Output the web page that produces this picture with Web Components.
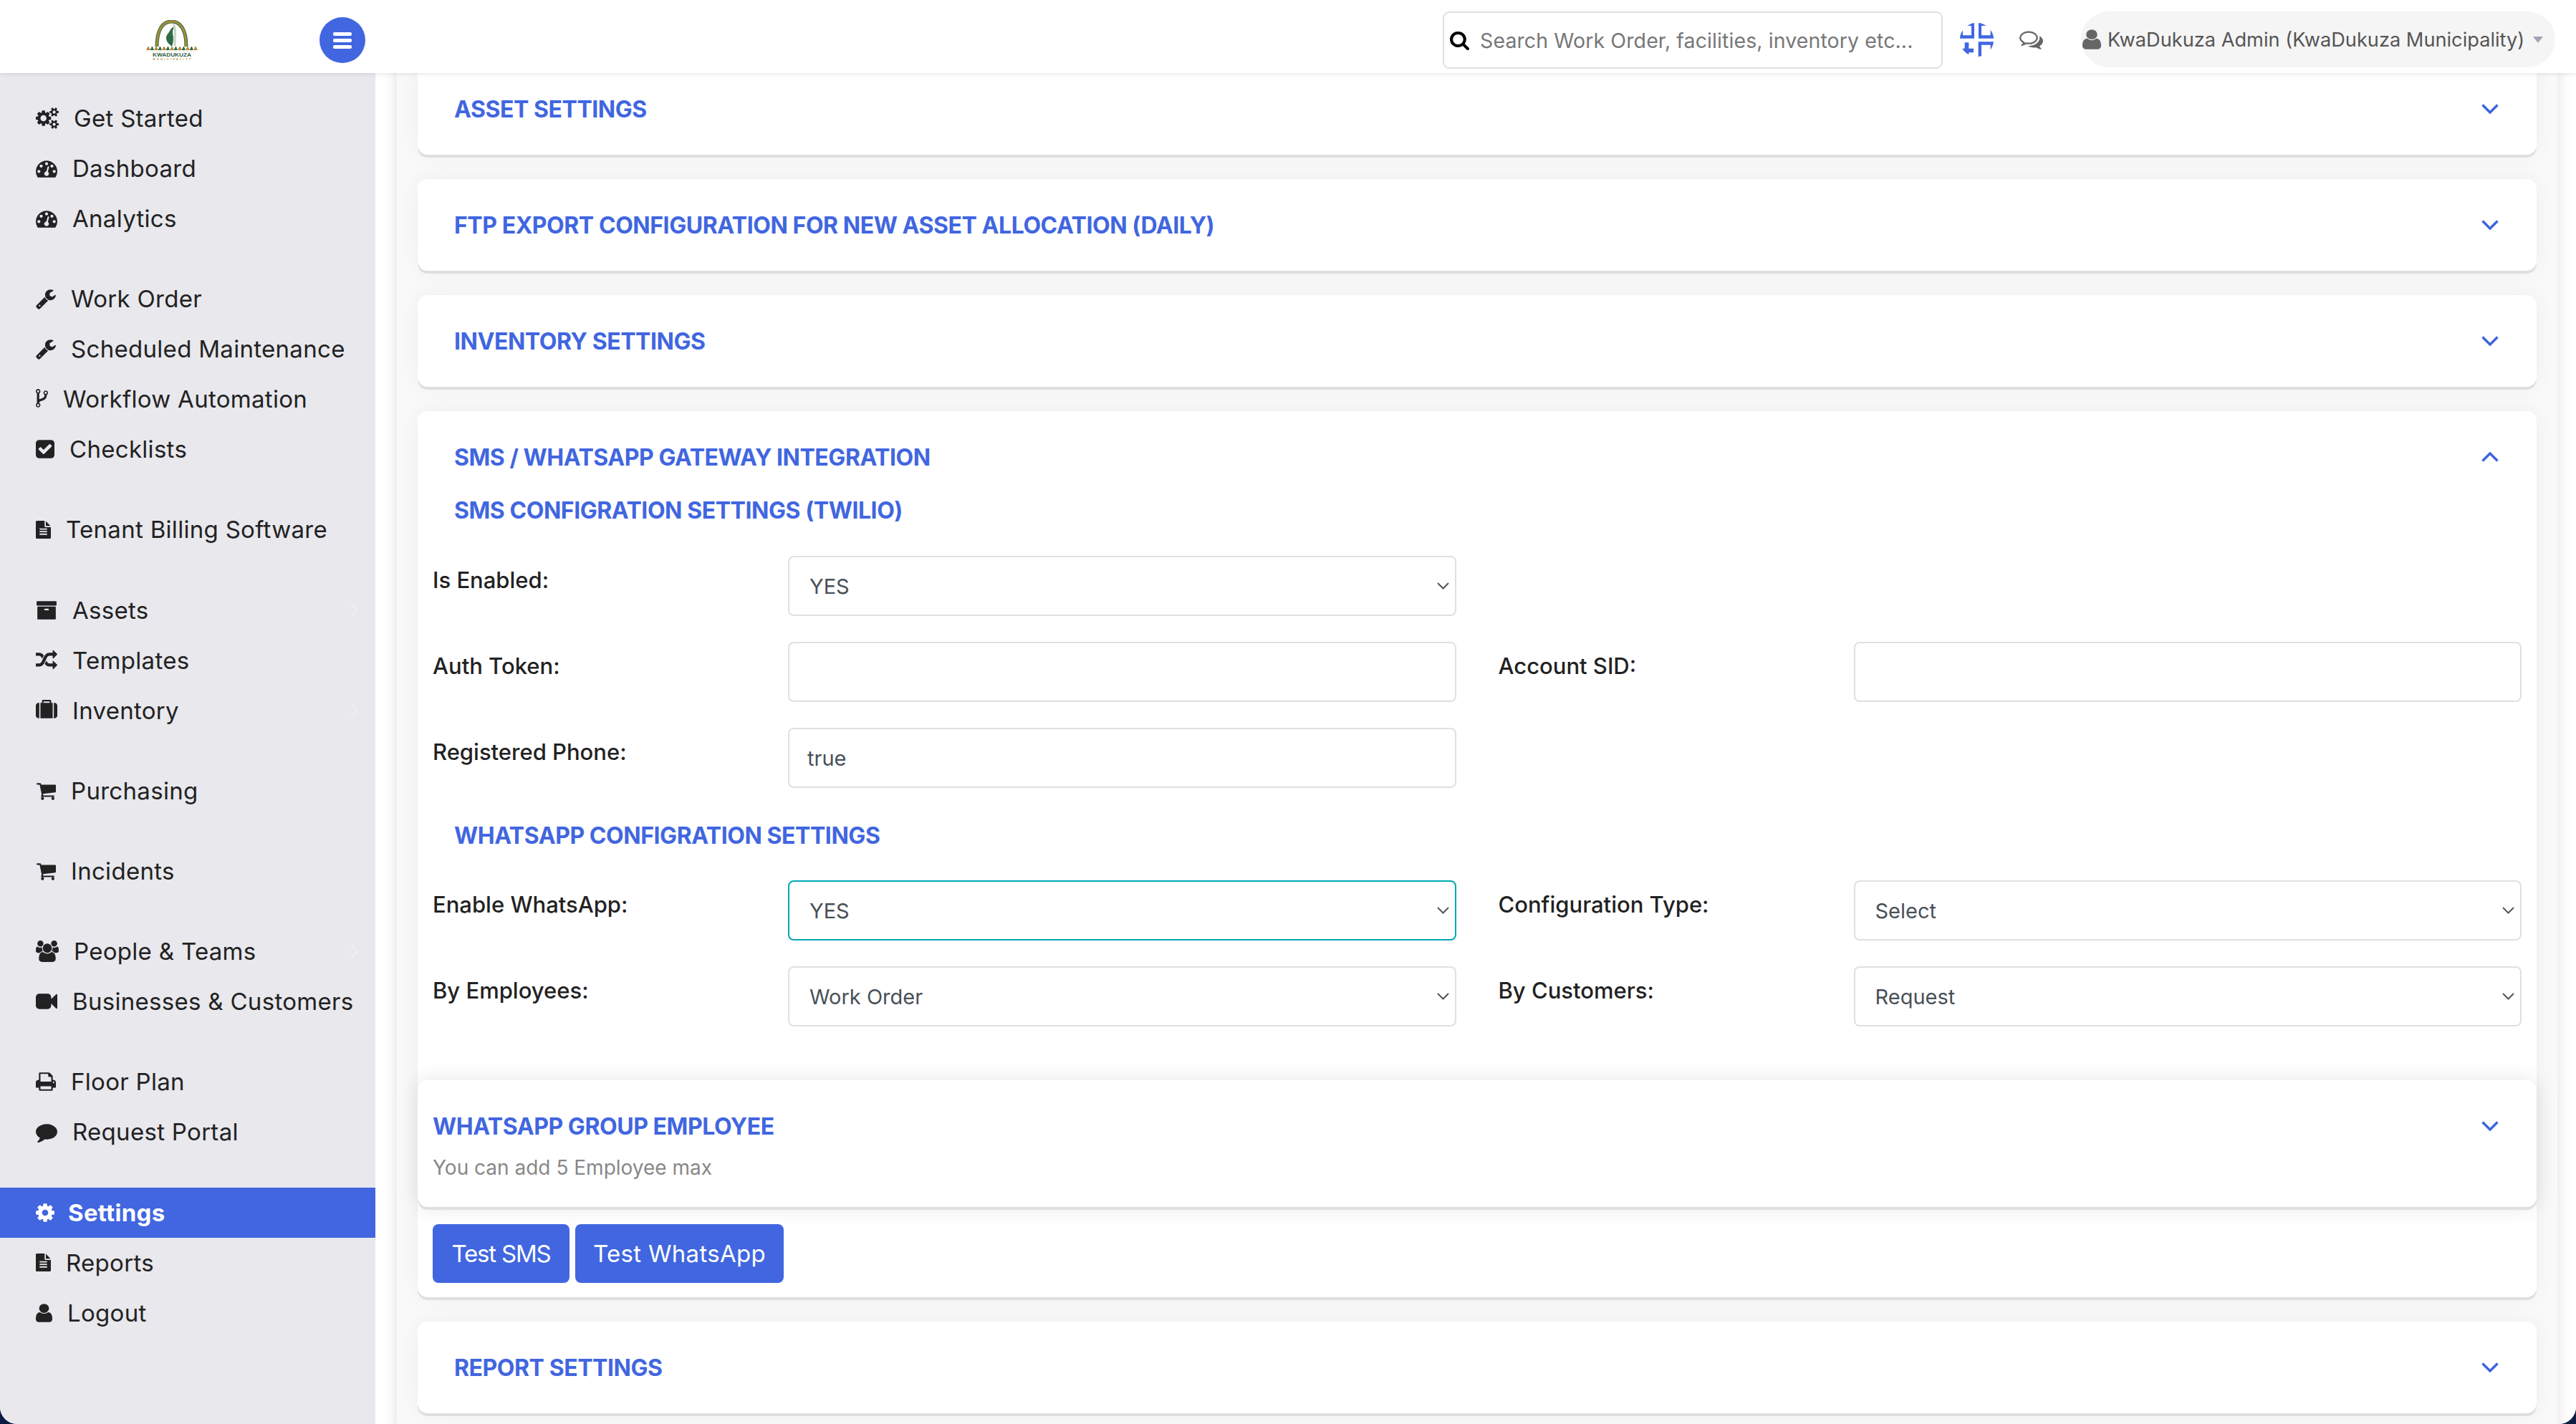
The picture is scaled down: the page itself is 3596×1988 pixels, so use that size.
<!DOCTYPE html>
<html>
<head>
<meta charset="utf-8">
<title>Settings</title>
<style>
  html, body { margin: 0; padding: 0; background: #0a1c42; }
  body { font-family: Inter, "Noto Sans", sans-serif; }
</style>
</head>
<body>
<app-shell>
  <app-header slot="header"></app-header>
  <side-nav slot="nav">
    <nav-group>
      <nav-item icon="cogs">Get Started</nav-item>
      <nav-item icon="dashboard">Dashboard</nav-item>
      <nav-item icon="dashboard">Analytics</nav-item>
    </nav-group>
    <nav-group>
      <nav-item icon="wrench">Work Order</nav-item>
      <nav-item icon="wrench">Scheduled Maintenance</nav-item>
      <nav-item icon="fork">Workflow Automation</nav-item>
      <nav-item icon="check">Checklists</nav-item>
    </nav-group>
    <nav-group>
      <nav-item icon="file">Tenant Billing Software</nav-item>
    </nav-group>
    <nav-group>
      <nav-item icon="archive" sub>Assets</nav-item>
      <nav-item icon="random">Templates</nav-item>
      <nav-item icon="suitcase" sub>Inventory</nav-item>
    </nav-group>
    <nav-group>
      <nav-item icon="cart">Purchasing</nav-item>
    </nav-group>
    <nav-group>
      <nav-item icon="cart">Incidents</nav-item>
    </nav-group>
    <nav-group>
      <nav-item icon="users" sub>People &amp; Teams</nav-item>
      <nav-item icon="video">Businesses &amp; Customers</nav-item>
    </nav-group>
    <nav-group>
      <nav-item icon="print">Floor Plan</nav-item>
      <nav-item icon="comment">Request Portal</nav-item>
    </nav-group>
    <nav-group>
      <nav-item icon="cog" active>Settings</nav-item>
      <nav-item icon="file">Reports</nav-item>
      <nav-item icon="user">Logout</nav-item>
    </nav-group>
  </side-nav>

  <settings-panel>
    <accordion-card class="first" heading="ASSET SETTINGS"></accordion-card>
    <accordion-card heading="FTP EXPORT CONFIGURATION FOR NEW ASSET ALLOCATION (DAILY)"></accordion-card>
    <accordion-card heading="INVENTORY SETTINGS"></accordion-card>
    <accordion-card heading="SMS / WHATSAPP GATEWAY INTEGRATION" open expanded>
      <section-title>SMS CONFIGRATION SETTINGS (TWILIO)</section-title>
      <form-row class="top">
        <form-field label="Is Enabled:"><form-select value="YES"></form-select></form-field>
      </form-row>
      <form-row>
        <form-field label="Auth Token:"><form-input></form-input></form-field>
        <form-field label="Account SID:"><form-input></form-input></form-field>
      </form-row>
      <form-row>
        <form-field label="Registered Phone:"><form-input value="true"></form-input></form-field>
      </form-row>
      <section-title class="second">WHATSAPP CONFIGRATION SETTINGS</section-title>
      <form-row>
        <form-field label="Enable WhatsApp:"><form-select value="YES" focused></form-select></form-field>
        <form-field label="Configuration Type:"><form-select value="Select"></form-select></form-field>
      </form-row>
      <form-row>
        <form-field label="By Employees:"><form-select value="Work Order"></form-select></form-field>
        <form-field label="By Customers:"><form-select value="Request"></form-select></form-field>
      </form-row>
      <accordion-card inner open heading="WHATSAPP GROUP EMPLOYEE">You can add 5 Employee max</accordion-card>
      <button-bar>
        <action-button style="width:191px;letter-spacing:-1.2px">Test SMS</action-button>
        <action-button style="width:291px;letter-spacing:.3px">Test WhatsApp</action-button>
      </button-bar>
    </accordion-card>
    <accordion-card heading="REPORT SETTINGS"></accordion-card>
  </settings-panel>
</app-shell>

<script>
const ICONS = {
  cogs: [0, 1920, 30, 32, 'M896 896q0-106-75-181t-181-75-181 75-75 181 75 181 181 75 181-75 75-181zm768 512q0-52-38-90t-90-38-90 38-38 90q0 53 37.5 90.5t90.5 37.5 90.5-37.5 37.5-90.5zm0-1024q0-52-38-90t-90-38-90 38-38 90q0 53 37.5 90.5t90.5 37.5 90.5-37.5 37.5-90.5zm-384 421v185q0 10-7 19.5t-16 10.5l-155 24q-11 35-32 76 34 48 90 115 7 11 7 20 0 12-7 19-23 30-82.5 89.5t-78.5 59.5q-11 0-21-7l-115-90q-37 19-77 31-11 108-23 155-7 24-30 24h-186q-11 0-20-7.5t-10-17.5l-23-153q-34-10-75-31l-118 89q-7 7-20 7-11 0-21-8-144-133-144-160 0-9 7-19 10-14 41-53t47-61q-23-44-35-82l-152-24q-10-1-17-9.5t-7-19.5v-185q0-10 7-19.5t16-10.5l155-24q11-35 32-76-34-48-90-115-7-11-7-20 0-12 7-20 22-30 82-89t79-59q11 0 21 7l115 90q34-18 77-32 11-108 23-154 7-24 30-24h186q11 0 20 7.5t10 17.5l23 153q34 10 75 31l118-89q8-7 20-7 11 0 21 8 144 133 144 160 0 8-7 19-12 16-42 54t-45 60q23 48 34 82l152 23q10 2 17 10.5t7 19.5zm640 533v140q0 16-149 31-12 27-30 52 51 113 51 138 0 4-4 7-122 71-124 71-8 0-46-47t-52-68q-20 2-30 2t-30-2q-14 21-52 68t-46 47q-2 0-124-71-4-3-4-7 0-25 51-138-18-25-30-52-149-15-149-31v-140q0-16 149-31 13-29 30-52-51-113-51-138 0-4 4-7 4-2 35-20t59-34 30-16q8 0 46 46.5t52 67.5q20-2 30-2t30 2q51-71 92-112l6-2q4 0 124 70 4 3 4 7 0 25-51 138 17 23 30 52 149 15 149 31zm0-1024v140q0 16-149 31-12 27-30 52 51 113 51 138 0 4-4 7-122 71-124 71-8 0-46-47t-52-68q-20 2-30 2t-30-2q-14 21-52 68t-46 47q-2 0-124-71-4-3-4-7 0-25 51-138-18-25-30-52-149-15-149-31v-140q0-16 149-31 13-29 30-52-51-113-51-138 0-4 4-7 4-2 35-20t59-34 30-16q8 0 46 46.5t52 67.5q20-2 30-2t30 2q51-71 92-112l6-2q4 0 124 70 4 3 4 7 0 25-51 138 17 23 30 52 149 15 149 31z'],
  dashboard: [0, 1792, 30, 30, 'M384 1152q0-53-37.5-90.5t-90.5-37.5-90.5 37.5-37.5 90.5 37.5 90.5 90.5 37.5 90.5-37.5 37.5-90.5zm192-448q0-53-37.5-90.5t-90.5-37.5-90.5 37.5-37.5 90.5 37.5 90.5 90.5 37.5 90.5-37.5 37.5-90.5zm428 481l101-382q6-26-7.5-48.5t-38.5-29.5-48 6.5-30 39.5l-101 382q-60 5-107 43.5t-63 98.5q-20 77 20 146t117 89 146-20 89-117q16-60-6-117t-72-91zm660-33q0-53-37.5-90.5t-90.5-37.5-90.5 37.5-37.5 90.5 37.5 90.5 90.5 37.5 90.5-37.5 37.5-90.5zm-640-640q0-53-37.5-90.5t-90.5-37.5-90.5 37.5-37.5 90.5 37.5 90.5 90.5 37.5 90.5-37.5 37.5-90.5zm448 192q0-53-37.5-90.5t-90.5-37.5-90.5 37.5-37.5 90.5 37.5 90.5 90.5 37.5 90.5-37.5 37.5-90.5zm320 448q0 261-141 483-19 29-54 29h-1402q-35 0-54-29-141-221-141-483 0-182 71-348t191-286 286-191 348-71 348 71 286 191 191 286 71 348z'],
  wrench: [64, 1664, 30, 28, 'M448 1472q0-26-19-45t-45-19-45 19-19 45 19 45 45 19 45-19 19-45zm644-420l-682 682q-37 37-90 37-52 0-91-37l-106-108q-38-36-38-90 0-53 38-91l681-681q39 98 114.5 173.5t173.5 114.5zm634-435q0 39-23 106-47 134-164.5 217.5t-258.5 83.5q-185 0-316.5-131.5t-131.5-316.5 131.5-316.5 316.5-131.5q58 0 121.5 16.5t107.5 46.5q16 11 16 28t-16 28l-293 169v224l193 107q5-3 79-48.5t135.5-81 70.5-35.5q15 0 23.5 10t8.5 25z'],
  fork: [192, 1024, 30, 17, 'M480 1408q0-40-28-68t-68-28-68 28-28 68 28 68 68 28 68-28 28-68zm0-1152q0-40-28-68t-68-28-68 28-28 68 28 68 68 28 68-28 28-68zm640 128q0-40-28-68t-68-28-68 28-28 68 28 68 68 28 68-28 28-68zm96 0q0 52-26 96.5t-70 69.5q-2 287-226 414-67 38-203 81-128 40-169.5 71t-41.5 100v26q44 25 70 69.5t26 96.5q0 80-56 136t-136 56-136-56-56-136q0-52 26-96.5t70-69.5v-820q-44-25-70-69.5t-26-96.5q0-80 56-136t136-56 136 56 56 136q0 52-26 96.5t-70 69.5v497q54-26 154-57 55-17 87.5-29.5t70.5-31 59-39.5 40.5-51 28-69.5 8.5-91.5q-44-25-70-69.5t-26-96.5q0-80 56-136t136-56 136 56 56 136z'],
  check: [128, 1536, 30, 26, 'M813 1299l614-614q19-19 19-45t-19-45l-102-102q-19-19-45-19t-45 19l-467 467-211-211q-19-19-45-19t-45 19l-102 102q-19 19-19 45t19 45l358 358q19 19 45 19t45-19zm851-883v960q0 119-84.5 203.5t-203.5 84.5h-960q-119 0-203.5-84.5t-84.5-203.5v-960q0-119 84.5-203.5t203.5-84.5h960q119 0 203.5 84.5t84.5 203.5z'],
  file: [128, 1536, 25, 21, 'M1596 476q14 14 28 36h-472v-472q22 14 36 28zm-476 164h544v1056q0 40-28 68t-68 28h-1344q-40 0-68-28t-28-68v-1600q0-40 28-68t68-28h800v544q0 40 28 68t68 28zm160 736v-64q0-14-9-23t-23-9h-704q-14 0-23 9t-9 23v64q0 14 9 23t23 9h704q14 0 23-9t9-23zm0-256v-64q0-14-9-23t-23-9h-704q-14 0-23 9t-9 23v64q0 14 9 23t23 9h704q14 0 23-9t9-23zm0-256v-64q0-14-9-23t-23-9h-704q-14 0-23 9t-9 23v64q0 14 9 23t23 9h704q14 0 23-9t9-23z'],
  archive: [0, 1792, 30, 30, 'M1088 832q0-26-19-45t-45-19h-256q-26 0-45 19t-19 45 19 45 45 19h256q26 0 45-19t19-45zm576-192v960q0 26-19 45t-45 19h-1408q-26 0-45-19t-19-45v-960q0-26 19-45t45-19h1408q26 0 45 19t19 45zm64-448v256q0 26-19 45t-45 19h-1536q-26 0-45-19t-19-45v-256q0-26 19-45t45-19h1536q26 0 45 19t19 45z'],
  random: [0, 1792, 30, 30, 'M666 481q-60 92-137 273-22-45-37-72.5t-40.5-63.5-51-56.5-63-35-81.5-14.5h-224q-14 0-23-9t-9-23v-192q0-14 9-23t23-9h224q250 0 410 225zm1126 799q0 14-9 23l-320 320q-9 9-23 9-13 0-22.5-9.5t-9.5-22.5v-192q-32 0-85 .5t-81 1-73-1-71-5-64-10.5-63-18.5-58-28.5-59-40-55-53.5-56-69.5q59-93 136-273 22 45 37 72.5t40.5 63.5 51 56.5 63 35 81.5 14.5h256v-192q0-14 9-23t23-9q12 0 24 10l319 319q9 9 9 23zm0-896q0 14-9 23l-320 320q-9 9-23 9-13 0-22.5-9.5t-9.5-22.5v-192h-256q-48 0-87 15t-69 45-51 61.5-45 77.5q-32 62-78 171-29 66-49.5 111t-54 105-64 100-74 83-90 68.5-106.5 42-128 16.5h-224q-14 0-23-9t-9-23v-192q0-14 9-23t23-9h224q48 0 87-15t69-45 51-61.5 45-77.5q32-62 78-171 29-66 49.5-111t54-105 64-100 74-83 90-68.5 106.5-42 128-16.5h256v-192q0-14 9-23t23-9q12 0 24 10l319 319q9 9 9 23z'],
  suitcase: [0, 1792, 30, 30, 'M640 256h512v-128h-512v128zm-352 0v1280h-64q-92 0-158-66t-66-158v-832q0-92 66-158t158-66h64zm1120 0v1280h-1024v-1280h128v-160q0-40 28-68t68-28h576q40 0 68 28t28 68v160h128zm384 224v832q0 92-66 158t-158 66h-64v-1280h64q92 0 158 66t66 158z'],
  cart: [0, 1728, 30, 28, 'M704 1536q0 52-38 90t-90 38-90-38-38-90 38-90 90-38 90 38 38 90zm896 0q0 52-38 90t-90 38-90-38-38-90 38-90 90-38 90 38 38 90zm128-1088v512q0 24-16.5 42.5t-40.5 21.5l-1044 122q13 60 13 70 0 16-24 64h920q26 0 45 19t19 45-19 45-45 19h-1024q-26 0-45-19t-19-45q0-11 8-31.5t16-36 21.5-40 15.5-29.5l-177-823h-204q-26 0-45-19t-19-45 19-45 45-19h256q16 0 28.5 6.5t19.5 15.5 13 24.5 8 26 5.5 29.5 4.5 26h1201q26 0 45 19t19 45z'],
  users: [0, 1920, 30, 32, 'M593 896q-162 5-265 128h-134q-82 0-138-40.5t-56-118.5q0-353 124-353 6 0 43.5 21t97.5 42.5 119 21.5q67 0 133-23-5 37-5 66 0 139 81 256zm1071 637q0 120-73 189.5t-194 69.5h-874q-121 0-194-69.5t-73-189.5q0-53 3.5-103.5t14-109 26.5-108.5 43-97.5 62-81 85.5-53.5 111.5-20q10 0 43 21.5t73 48 107 48 135 21.5 135-21.5 107-48 73-48 43-21.5q61 0 111.5 20t85.5 53.5 62 81 43 97.5 26.5 108.5 14 109 3.5 103.5zm-1024-1277q0 106-75 181t-181 75-181-75-75-181 75-181 181-75 181 75 75 181zm704 384q0 159-112.5 271.5t-271.5 112.5-271.5-112.5-112.5-271.5 112.5-271.5 271.5-112.5 271.5 112.5 112.5 271.5zm576 225q0 78-56 118.5t-138 40.5h-134q-103-123-265-128 81-117 81-256 0-29-5-66 66 23 133 23 59 0 119-21.5t97.5-42.5 43.5-21q124 0 124 353zm-128-609q0 106-75 181t-181 75-181-75-75-181 75-181 181-75 181 75 75 181z'],
  video: [0, 1792, 30, 30, 'M1792 352v1088q0 42-39 59-13 5-25 5-27 0-45-19l-403-403v166q0 119-84.5 203.5t-203.5 84.5h-704q-119 0-203.5-84.5t-84.5-203.5v-704q0-119 84.5-203.5t203.5-84.5h704q119 0 203.5 84.5t84.5 203.5v165l403-402q18-19 45-19 12 0 25 5 39 17 39 59z'],
  print: [64, 1664, 30, 28, 'M448 1536h896v-256h-896v256zm0-640h896v-384h-160q-40 0-68-28t-28-68v-160h-640v640zm1152 64q0-26-19-45t-45-19-45 19-19 45 19 45 45 19 45-19 19-45zm128 0v416q0 13-9.5 22.5t-22.5 9.5h-224v160q0 40-28 68t-68 28h-960q-40 0-68-28t-28-68v-160h-224q-13 0-22.5-9.5t-9.5-22.5v-416q0-79 56.5-135.5t135.5-56.5h64v-544q0-40 28-68t68-28h672q40 0 88 20t76 48l152 152q28 28 48 76t20 88v256h64q79 0 135.5 56.5t56.5 135.5z'],
  comment: [0, 1792, 30, 30, 'M1792 896q0 174-120 321.5t-326 233-450 85.5q-70 0-145-8-198 175-460 242-49 14-114 22-17 2-30.5-9t-17.5-29v-1q-3-4-.5-12t2-10 4.5-9.5l6-9 7-8.5 8-9q7-8 31-34.5t34.5-38 31-39.5 32.5-51 27-59 26-76q-157-89-247.5-220t-90.5-281q0-130 71-248.5t191-204.5 286-136.5 348-50.5q244 0 450 85.5t326 233 120 321.5z'],
  cog: [128, 1536, 30, 26, 'M1152 896q0-106-75-181t-181-75-181 75-75 181 75 181 181 75 181-75 75-181zm512-109v222q0 12-8 23t-20 13l-185 28q-19 54-39 91 35 50 107 138 10 12 10 25t-9 23q-27 37-99 108t-94 71q-12 0-26-9l-138-108q-44 23-91 38-16 136-29 186-7 28-36 28h-222q-14 0-24.5-8.5t-11.5-21.5l-28-184q-49-16-90-37l-141 107q-10 9-25 9-14 0-25-11-126-114-165-168-7-10-7-23 0-12 8-23 15-21 51-66.5t54-70.5q-27-50-41-99l-183-27q-13-2-21-12.5t-8-23.5v-222q0-12 8-23t19-13l186-28q14-46 39-92-40-57-107-138-10-12-10-24 0-10 9-23 26-36 98.5-107.5t94.5-71.5q13 0 26 10l138 107q44-23 91-38 16-136 29-186 7-28 36-28h222q14 0 24.5 8.5t11.5 21.5l28 184q49 16 90 37l142-107q9-9 24-9 13 0 25 10 129 119 165 170 7 8 7 22 0 12-8 23-15 21-51 66.5t-54 70.5q26 50 41 98l183 28q13 2 21 12.5t8 23.5z'],
  user: [256, 1280, 30, 23, 'M1536 1399q0 109-62.5 187t-150.5 78h-854q-88 0-150.5-78t-62.5-187q0-85 8.5-160.5t31.5-152 58.5-131 94-89 134.5-34.5q131 128 313 128t313-128q76 0 134.5 34.5t94 89 58.5 131 31.5 152 8.5 160.5zm-256-887q0 159-112.5 271.5t-271.5 112.5-271.5-112.5-112.5-271.5 112.5-271.5 271.5-112.5 271.5 112.5 112.5 271.5z'],
  search: [64, 1664, 28, 27, 'M1216 832q0-185-131.5-316.5t-316.5-131.5-316.5 131.5-131.5 316.5 131.5 316.5 316.5 131.5 316.5-131.5 131.5-316.5zm512 832q0 52-38 90t-90 38q-54 0-90-38l-343-342q-179 124-399 124-143 0-273.5-55.5t-225-150-150-225-55.5-273.5 55.5-273.5 150-225 225-150 273.5-55.5 273.5 55.5 225 150 150 225 55.5 273.5q0 220-124 399l343 343q37 37 37 90z'],
  comments: [0, 1792, 32, 33, 'M704 384q-153 0-286 52t-211.5 141-78.5 191q0 82 53 158t149 132l97 56-35 84q34-20 62-39l44-31 53 10q78 14 153 14 153 0 286-52t211.5-141 78.5-191-78.5-191-211.5-141-286-52zm0-128q191 0 353.5 68.5t256.5 186.5 94 257-94 257-256.5 186.5-353.5 68.5q-86 0-176-16-124 88-278 128-36 9-86 16h-3q-11 0-20.5-8t-11.5-21q-1-3-1-6.5t.5-6.5 2-6l2.5-5 3.5-5.5 4-5 4.5-5 4-4.5q5-6 23-25t26-29.5 22.5-29 25-38.5 20.5-44q-124-72-195-177t-71-224q0-139 94-257t256.5-186.5 353.5-68.5zm822 1169q10 24 20.5 44t25 38.5 22.5 29 26 29.5 23 25q1 1 4 4.5t4.5 5 4 5 3.5 5.5l2.5 5 2 6 .5 6.5-1 6.5q-3 14-13 22t-22 7q-50-7-86-16-154-40-278-128-90 16-176 16-271 0-472-132 58 4 88 4 161 0 309-45t264-129q125-92 192-212t67-254q0-77-23-152 129 71 204 178t75 230q0 120-71 224.5t-195 176.5z']
};

// [viewBox x, viewBox width, height, width, path]
function iconSvg(name, height, width) {
  const [vx, vw, h, w, d] = ICONS[name];
  return `<svg viewBox="${vx} 0 ${vw} 1792" width="${width || w}" height="${height || h}" preserveAspectRatio="none" fill="currentColor" style="display:block;flex:none"><path d="${d}"/></svg>`;
}

class AppShell extends HTMLElement {
  constructor() {
    super();
    this.attachShadow({ mode: 'open' });
    this.shadowRoot.innerHTML = `
      <style>
        :host {
          display: grid;
          grid-template-columns: 524px 1fr;
          grid-template-rows: 102px 1fr;
          height: 1988px;
          overflow: hidden;
          background: #fff;
          border-radius: 0 0 24px 24px;
        }
        .header { grid-column: 1 / 3; position: relative; z-index: 2; }
        .main { background: #fff; padding: 0 26px 0 30px; min-height: 0; }
      </style>
      <div class="header"><slot name="header"></slot></div>
      <slot name="nav"></slot>
      <div class="main"><slot></slot></div>
    `;
  }
}

class AppHeader extends HTMLElement {
  constructor() {
    super();
    this.attachShadow({ mode: 'open' });
    this.shadowRoot.innerHTML = `
      <style>
        :host {
          display: flex;
          align-items: center;
          height: 102px;
          background: #fff;
          box-shadow: 0 2px 5px rgba(0,0,0,.09);
          padding: 8px 29px 0 204px;
          box-sizing: border-box;
        }
        .logo { display: block; width: 72px; height: 56px; flex: none; margin-top: 2px; }
        .burger {
          width: 64px; height: 64px; margin: 2px 0 0 170px; flex: none;
          border-radius: 50%; background: #4166e0;
          display: flex; flex-direction: column; justify-content: center; align-items: center; gap: 4px;
        }
        .burger i { display: block; width: 26px; height: 5px; border-radius: 2px; background: #fff; }
        .search {
          margin: 2px 0 0 auto;
          width: 698px; height: 80px; box-sizing: border-box;
          border: 2px solid #e0e0e0; border-radius: 9px;
          display: flex; align-items: center; padding-left: 8px; gap: 15px; color: #000;
        }
        .search input {
          border: 0; outline: 0; flex: 1; min-width: 0; padding: 0; background: none;
          font: 400 28.5px Inter, sans-serif; letter-spacing: .1px; color: #777;
        }
        .search input::placeholder { color: #777; opacity: 1; }
        .scan { display: block; margin-left: 24px; flex: none; }
        .chat { margin-left: 36px; color: #666; flex: none; }
        .user {
          margin-left: 53px; width: 662px; height: 78px; box-sizing: border-box; flex: none;
          background: #f5f5f5; border-radius: 39px;
          display: flex; align-items: center; padding-left: 2px; color: #666;
        }
        .user span { margin-left: 9px; font: 400 27.2px Inter, sans-serif; color: #555; white-space: nowrap; }
        .caret {
          margin-left: auto; margin-right: 17px; width: 0; height: 0;
          border-left: 7px solid transparent; border-right: 7px solid transparent;
          border-top: 9px solid #a5a5b8;
        }
      </style>
      <svg class="logo" viewBox="0 0 72 56">
        <defs>
          <pattern id="tri" width="11" height="7" patternUnits="userSpaceOnUse">
            <path d="M0 7L3 1 6 7z" fill="#b58a3a"/><path d="M5.5 7L8.5 1 11 7z" fill="#2f6b45"/>
          </pattern>
        </defs>
        <path d="M15 37C15 12 24 2 35.5 2S56 12 56 37" fill="none" stroke="#2f6b45" stroke-width="5"/>
        <path d="M15 37C15 12 24 2 35.5 2S56 12 56 37" fill="none" stroke="#a98c35" stroke-width="3"/>
        <path d="M40 8C36 14 37 18 38 24 38 30 37 34 36 37 33 34 28 31 28 25 28 20 33 17 34 13 36 11 38 9 40 8Z" fill="#2f6b45"/>
        <path d="M38 6C42 12 40 22 40 36" fill="none" stroke="#c9d2c8" stroke-width="3"/>
        <rect x="0" y="37" width="72" height="7" fill="url(#tri)"/>
        <text x="36" y="51" text-anchor="middle" textLength="54" lengthAdjust="spacingAndGlyphs" font-family="Liberation Sans" font-weight="700" font-size="7" fill="#2f5f48">KWADUKUZA</text>
        <text x="36" y="56" text-anchor="middle" textLength="53" lengthAdjust="spacing" font-family="Liberation Sans" font-weight="700" font-size="3.6" fill="#b58a3a">MUNICIPALITY</text>
      </svg>
      <div class="burger"><i></i><i></i><i></i></div>
      <div class="search">${iconSvg('search')}<input type="text" placeholder="Search Work Order, facilities, inventory etc..."></div>
      <svg class="scan" width="47" height="47" viewBox="48 93 141 141" fill="#4166e0">
        <defs><clipPath id="disc"><circle cx="118.5" cy="163.5" r="71"/></clipPath></defs>
        <g clip-path="url(#disc)">
          <path fill-rule="evenodd" d="M48 93H108V158H48ZM60 105V145H96V105Z"/>
          <path fill-rule="evenodd" d="M126 93H189V158H126ZM138 105V145H176V105Z"/>
          <path d="M48 200H68V175H85V200H105V217H85V234H68V217H48Z"/>
          <path fill-rule="evenodd" d="M125 172H189V234H125ZM138 185V234H176V185Z"/>
        </g>
      </svg>
      <div class="chat">${iconSvg('comments')}</div>
      <div class="user">
        ${iconSvg('user', 32, 26)}
        <span>KwaDukuza Admin (KwaDukuza Municipality)</span>
        <i class="caret"></i>
      </div>
    `;
  }
}

class SideNav extends HTMLElement {
  constructor() {
    super();
    this.attachShadow({ mode: 'open' });
    this.shadowRoot.innerHTML = `
      <style>
        :host {
          display: block;
          background: #e8e8ed;
          padding-top: 28px;
          min-height: 0;
          overflow: hidden;
        }
      </style>
      <slot></slot>
    `;
  }
}

class NavGroup extends HTMLElement {
  constructor() {
    super();
    this.attachShadow({ mode: 'open' });
    this.shadowRoot.innerHTML = `
      <style>:host { display: block; margin-bottom: 42.2px; }</style>
      <slot></slot>
    `;
  }
}

class NavItem extends HTMLElement {
  constructor() {
    super();
    this.attachShadow({ mode: 'open' });
  }
  connectedCallback() {
    const sub = this.hasAttribute('sub')
      ? '<svg class="sub" width="12" height="22" viewBox="0 0 12 22" fill="none" stroke="#efeff3" stroke-width="2"><path d="M1 1l10 10L1 21"/></svg>'
      : '';
    this.shadowRoot.innerHTML = `
      <style>
        :host {
          display: flex;
          align-items: center;
          gap: 21px;
          height: 70px;
          padding-left: 50px;
          box-sizing: border-box;
          position: relative;
          color: #222;
          font: 400 33px Inter, sans-serif;
          letter-spacing: .3px;
          white-space: nowrap;
        }
        :host([active]) { background: #4166e0; color: #fff; font-weight: 700; gap: 19px; }
        .sub { position: absolute; left: 488px; top: 24px; }
      </style>
      ${iconSvg(this.getAttribute('icon'))}
      <span><slot></slot></span>
      ${sub}
    `;
  }
}

class SettingsPanel extends HTMLElement {
  constructor() {
    super();
    this.attachShadow({ mode: 'open' });
    this.shadowRoot.innerHTML = `
      <style>
        :host {
          display: block;
          margin-top: -14px;
          padding: 0 29px;
          height: 1920px;
          background: #f9f9f9;
          box-shadow: 0 0 20px rgba(0,0,0,.13);
        }
      </style>
      <slot></slot>
    `;
  }
}

class AccordionCard extends HTMLElement {
  constructor() {
    super();
    this.attachShadow({ mode: 'open' });
  }
  connectedCallback() {
    const up = this.hasAttribute('expanded');
    this.shadowRoot.innerHTML = `
      <style>
        :host {
          display: block;
          background: #fff;
          border-radius: 14px;
          box-shadow: 0 4px 0 #dfdfdf, 0 0 30px rgba(0,0,0,.05);
          margin-bottom: 34px;
          font: 700 32px Inter, sans-serif;
        }
        :host([inner]) {
          margin: 75px -21px 0;
          box-shadow: 0 4px 0 #dfdfdf, 0 0 30px rgba(0,0,0,.1);
          height: 177px;
        }
        .head {
          display: flex; align-items: center; justify-content: space-between;
          height: 128px; box-sizing: border-box; padding: 0 53px 0 51px;
          color: #4166e0; letter-spacing: -.45px;
        }
        :host([open]) .head { height: 114px; align-items: flex-start; padding-top: 39px; }
        :host([inner]) .head { height: 104px; padding-left: 21px; }
        .head span { line-height: 50px; position: relative; top: 1px; }
        :host(:not([open])) .body { display: none; }
        .body { padding: 0 21px 20px; }
        :host([inner]) .body {
          padding: 0 21px; font: 400 28px/36px Inter, sans-serif; color: #888;
        }
        svg { flex: none; }
        :host([open]) svg { margin-top: 18px; }
      </style>
      <div class="head">
        <span>${this.getAttribute('heading')}</span>
        <svg width="24" height="14" viewBox="0 0 24 14" fill="none" stroke="#3d63e0" stroke-width="3.4">
          <path d="${up ? 'M1.5 12.5L12 2 22.5 12.5' : 'M1.5 1.5L12 12 22.5 1.5'}"/>
        </svg>
      </div>
      <div class="body"><slot></slot></div>
    `;
  }
}

class SectionTitle extends HTMLElement {
  constructor() {
    super();
    this.attachShadow({ mode: 'open' });
    this.shadowRoot.innerHTML = `
      <style>
        :host {
          display: block;
          padding-left: 30px;
          margin-bottom: 38px;
          font: 700 32px/50px Inter, sans-serif;
          letter-spacing: -.45px;
          color: #4166e0;
        }
        :host(.second) { margin-top: 42px; margin-bottom: 37px; }
      </style>
      <slot></slot>
    `;
  }
}

class FormRow extends HTMLElement {
  constructor() {
    super();
    this.attachShadow({ mode: 'open' });
    this.shadowRoot.innerHTML = `
      <style>
        :host {
          display: grid;
          grid-template-columns: 1fr 1fr;
          column-gap: 59px;
          margin-bottom: 36px;
        }
      </style>
      <slot></slot>
    `;
  }
}

class FormField extends HTMLElement {
  constructor() {
    super();
    this.attachShadow({ mode: 'open' });
  }
  connectedCallback() {
    this.shadowRoot.innerHTML = `
      <style>
        :host { display: grid; grid-template-columns: 496px 1fr; }
        label {
          font: 500 31px/50px Inter, sans-serif;
          color: #222;
          padding-top: 9px;
        }
      </style>
      <label>${this.getAttribute('label')}</label>
      <slot></slot>
    `;
  }
}

class FormSelect extends HTMLElement {
  constructor() {
    super();
    this.attachShadow({ mode: 'open' });
  }
  connectedCallback() {
    this.shadowRoot.innerHTML = `
      <style>
        :host { display: block; position: relative; }
        select {
          appearance: none; display: block; width: 100%; height: 84px; box-sizing: border-box;
          border: 2px solid #e0e0e0; border-radius: 8px; background: #fff;
          padding: 0 0 0 28px; outline: 0;
          font: 400 29px Inter, sans-serif; color: #495057;
        }
        :host([focused]) select { border-color: #00a8b5; }
        svg { position: absolute; right: 10px; top: 37px; pointer-events: none; }
      </style>
      <select><option>${this.getAttribute('value')}</option></select>
      <svg width="17" height="10" viewBox="0 0 17 10" fill="none" stroke="#555" stroke-width="2"><path d="M1 1l7.5 7.5L16 1"/></svg>
    `;
  }
}

class FormInput extends HTMLElement {
  constructor() {
    super();
    this.attachShadow({ mode: 'open' });
  }
  connectedCallback() {
    this.shadowRoot.innerHTML = `
      <style>
        :host { display: block; }
        input {
          display: block; width: 100%; height: 84px; box-sizing: border-box;
          border: 2px solid #e0e0e0; border-radius: 8px; background: #fff;
          padding: 0 0 0 25px; outline: 0;
          font: 400 29px Inter, sans-serif; color: #495057;
        }
      </style>
      <input type="text" value="${this.getAttribute('value') || ''}">
    `;
  }
}

class ButtonBar extends HTMLElement {
  constructor() {
    super();
    this.attachShadow({ mode: 'open' });
    this.shadowRoot.innerHTML = `
      <style>:host { display: flex; gap: 8px; margin-top: 24px; }</style>
      <slot></slot>
    `;
  }
}

class ActionButton extends HTMLElement {
  constructor() {
    super();
    this.attachShadow({ mode: 'open' });
    this.shadowRoot.innerHTML = `
      <style>
        :host {
          display: flex; align-items: center; justify-content: center; height: 82px; box-sizing: border-box;
          border-radius: 8px;
          background: #4166e0; color: #fff;
          font: 400 33px Inter, sans-serif;
          cursor: pointer;
        }
      </style>
      <slot></slot>
    `;
  }
}

customElements.define('app-shell', AppShell);
customElements.define('app-header', AppHeader);
customElements.define('side-nav', SideNav);
customElements.define('nav-group', NavGroup);
customElements.define('nav-item', NavItem);
customElements.define('settings-panel', SettingsPanel);
customElements.define('accordion-card', AccordionCard);
customElements.define('section-title', SectionTitle);
customElements.define('form-row', FormRow);
customElements.define('form-field', FormField);
customElements.define('form-select', FormSelect);
customElements.define('form-input', FormInput);
customElements.define('button-bar', ButtonBar);
customElements.define('action-button', ActionButton);
</script>
</body>
</html>
